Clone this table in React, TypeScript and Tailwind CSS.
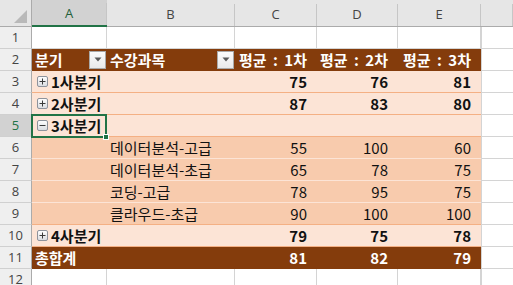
import React from "react";

const FONT = { fontFamily: "'Malgun Gothic', 'Noto Sans CJK KR', 'Noto Sans', sans-serif" };
const UI_FONT = { fontFamily: "'Open Sans', 'Noto Sans', sans-serif" };

type Kind = "empty" | "header" | "group" | "open" | "detail" | "total";
type Row = { n: number; kind: Kind; a?: string; b?: string; v?: (number | string)[] };

const rows: Row[] = [
  { n: 1, kind: "empty" },
  { n: 2, kind: "header", a: "분기", b: "수강과목", v: ["평균 : 1차", "평균 : 2차", "평균 : 3차"] },
  { n: 3, kind: "group", a: "1사분기", v: [75, 76, 81] },
  { n: 4, kind: "group", a: "2사분기", v: [87, 83, 80] },
  { n: 5, kind: "open", a: "3사분기", v: ["", "", ""] },
  { n: 6, kind: "detail", b: "데이터분석-고급", v: [55, 100, 60] },
  { n: 7, kind: "detail", b: "데이터분석-초급", v: [65, 78, 75] },
  { n: 8, kind: "detail", b: "코딩-고급", v: [78, 95, 75] },
  { n: 9, kind: "detail", b: "클라우드-초급", v: [90, 100, 100] },
  { n: 10, kind: "group", a: "4사분기", v: [79, 75, 78] },
  { n: 11, kind: "total", a: "총합계", v: [81, 82, 79] },
  { n: 12, kind: "empty" },
];

const valueWidths = ["w-[82px]", "w-[81px]", "w-[83px]"];

function ToggleBox({ open }: { open?: boolean }) {
  return (
    <svg width="11" height="11" viewBox="0 0 11 11" className="shrink-0">
      <defs>
        <linearGradient id="tg" x1="0" y1="0" x2="0" y2="1">
          <stop offset="0" stopColor="#ffffff" />
          <stop offset="1" stopColor="#d9dbe0" />
        </linearGradient>
      </defs>
      <rect x="0.5" y="0.5" width="10" height="10" rx="1.5" fill="url(#tg)" stroke="#8e939c" />
      <rect x="2.5" y="5" width="6" height="1" fill="#3a3a3a" />
      {!open && <rect x="5" y="2.5" width="1" height="6" fill="#3a3a3a" />}
    </svg>
  );
}

function FilterButton() {
  return (
    <div className="w-[17px] h-[18px] shrink-0 border border-[#a9a9a9] bg-gradient-to-b from-[#fbfbfb] to-[#e9e9e9] flex items-center justify-center">
      <svg width="8" height="5" viewBox="0 0 8 5">
        <path d="M0.5 0.5 L7.5 0.5 L4 4.5 Z" fill="#5a5a5a" />
      </svg>
    </div>
  );
}

function SheetRow({ row }: { row: Row }) {
  const { kind } = row;
  const selected = row.n === 5;

  let bg = "bg-white";
  let line = "border-[#d4d4d4]";
  if (kind === "header" || kind === "total") {
    bg = "bg-[#843c0c]";
    line = "border-[#843c0c]";
  } else if (kind === "group" || kind === "open") {
    bg = "bg-[#fce4d6]";
    line = "border-[#f4b084]";
  } else if (kind === "detail") {
    bg = "bg-[#f8cbad]";
    line = row.n === 9 ? "border-[#f4b084]" : "border-[#fce4d6]";
  }
  const pivot = kind !== "empty";
  const textColor = kind === "header" || kind === "total" ? "text-white" : "text-[#111]";
  const bold = kind === "group" || kind === "open" || kind === "total" || kind === "header";

  return (
    <div className="flex h-[22px]">
      <div
        className={`w-[32px] shrink-0 border-r border-b border-r-[#ababab] border-b-[#d0d0d0] flex items-center justify-center text-[13px] ${
          selected ? "bg-[#d2d2d2] text-[#217346]" : "bg-[#efefef] text-[#444]"
        }`}
        style={UI_FONT}
      >
        {row.n}
      </div>

      {pivot ? (
        <div className={`flex w-[449px] shrink-0 border-b ${bg} ${line} ${textColor} text-[15px] leading-[21px]`} style={FONT}>
          <div className="relative w-[75px] shrink-0 flex items-center pl-[3px] pr-[1px] whitespace-nowrap">
            {kind === "header" && (
              <>
                <span className="flex-1 font-bold">{row.a}</span>
                <FilterButton />
              </>
            )}
            {kind === "total" && <span className="font-bold">{row.a}</span>}
            {(kind === "group" || kind === "open") && (
              <>
                <span className="pl-[2px] pr-[3px] flex items-center">
                  <ToggleBox open={kind === "open"} />
                </span>
                <span className="font-bold">{row.a}</span>
              </>
            )}
            {selected && (
              <div className="absolute -left-[1px] -top-[1px] w-[76px] h-[24px] border-2 border-[#217346]">
                <div className="absolute -right-[4px] -bottom-[4px] w-[6px] h-[6px] bg-[#217346] border border-white" />
              </div>
            )}
          </div>
          <div className="w-[128px] shrink-0 flex items-center pl-[3px] pr-[1px] whitespace-nowrap">
            {kind === "header" && (
              <>
                <span className="flex-1 font-bold">{row.b}</span>
                <FilterButton />
              </>
            )}
            {kind === "detail" && <span>{row.b}</span>}
          </div>
          {row.v!.map((v, i) => (
            <div
              key={i}
              className={`${valueWidths[i]} shrink-0 flex items-center justify-end pr-[10px] whitespace-nowrap ${
                bold ? "font-bold" : ""
              } ${kind === "header" ? "[word-spacing:3px]" : ""}`}
            >
              {v}
            </div>
          ))}
        </div>
      ) : (
        <div className="flex w-[449px] shrink-0">
          {["w-[75px]", "w-[128px]", "w-[82px]", "w-[81px]", "w-[83px]"].map((w) => (
            <div key={w} className={`${w} shrink-0 border-r border-b border-[#d4d4d4]`} />
          ))}
        </div>
      )}
      <div className="flex-1 border-b border-l border-[#d4d4d4]" />
    </div>
  );
}

export default function App() {
  const cols = [
    { l: "A", w: "w-[75px]" },
    { l: "B", w: "w-[128px]" },
    { l: "C", w: "w-[82px]" },
    { l: "D", w: "w-[81px]" },
    { l: "E", w: "w-[83px]" },
  ];
  return (
    <div className="w-[513px] h-[285px] overflow-hidden bg-white select-none">
      <div className="flex h-[27px] bg-[#e6e6e6] border-b border-[#ababab]" style={UI_FONT}>
        <div className="w-[32px] shrink-0 border-r border-[#ababab] flex items-end justify-end pr-[4px] pb-[3px]">
          <svg width="13" height="13" viewBox="0 0 13 13">
            <path d="M13 0 L13 13 L0 13 Z" fill="#b9b9b9" />
          </svg>
        </div>
        {cols.map((c) => (
          <div
            key={c.l}
            className={`${c.w} shrink-0 flex items-end ${c.l === "A" ? "bg-[#d2d2d2] border-b-2 border-[#217346] -mb-px" : ""}`}
          >
            <div
              className={`w-full h-[22px] border-r border-[#c6c6c6] flex items-center justify-center text-[13px] ${
                c.l === "A" ? "text-[#1f5f3a]" : "text-[#444]"
              }`}
            >
              {c.l}
            </div>
          </div>
        ))}
        <div className="flex-1 flex items-end">
          <div className="w-[32px] h-[22px] border-r border-[#c6c6c6]" />
        </div>
      </div>
      {rows.map((r) => (
        <SheetRow key={r.n} row={r} />
      ))}
    </div>
  );
}
